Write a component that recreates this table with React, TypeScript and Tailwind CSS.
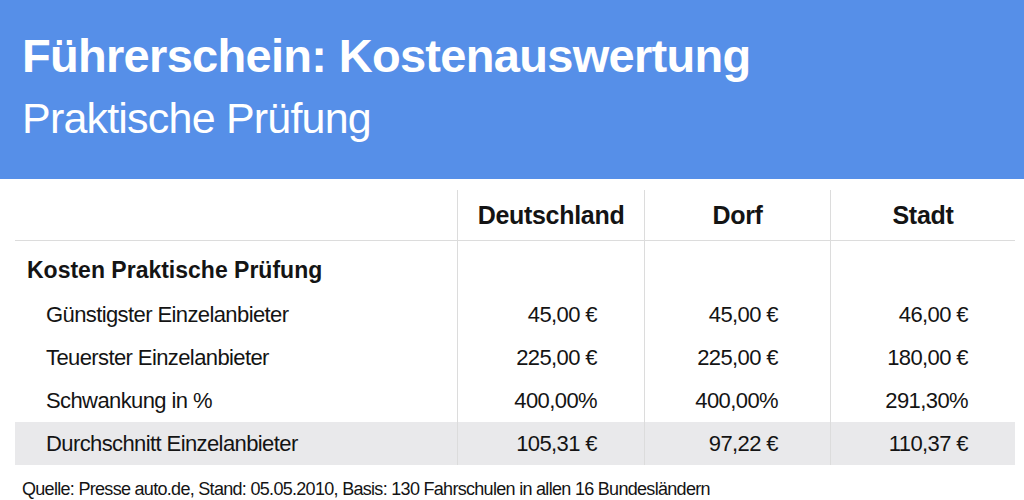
import React from 'react';

const rows = [
  { label: 'Günstigster Einzelanbieter', values: ['45,00 €', '45,00 €', '46,00 €'] },
  { label: 'Teuerster Einzelanbieter', values: ['225,00 €', '225,00 €', '180,00 €'] },
  { label: 'Schwankung in %', values: ['400,00%', '400,00%', '291,30%'] },
  { label: 'Durchschnitt Einzelanbieter', values: ['105,31 €', '97,22 €', '110,37 €'], shaded: true },
];

const cols = ['Deutschland', 'Dorf', 'Stadt'];
const padRight = ['pr-[47px]', 'pr-[52px]', 'pr-[47px]'];

const App: React.FC = () => {
  return (
    <div className="w-[1024px] h-[500px] overflow-hidden bg-white text-[#141414] font-['Liberation_Sans',Arial,sans-serif]">
      {/* Header */}
      <div className="h-[179px] bg-[#568fe8] pl-[22px] pt-[32px] text-white">
        <h1 className="text-[47px] leading-[47px] font-bold tracking-[-0.7px]">Führerschein: Kostenauswertung</h1>
        <h2 className="mt-[18px] text-[43px] leading-[43px] tracking-[-0.8px]">Praktische Prüfung</h2>
      </div>

      {/* Table */}
      <div className="mx-[15px] mt-[11px] grid grid-cols-[442px_187px_186px_185px]">
        <div className="h-[51px] border-b border-[#dcdcdc]" />
        {cols.map((c) => (
          <div
            key={c}
            className="h-[51px] border-b border-l border-[#dcdcdc] flex items-center justify-center text-[25px] leading-[25px] font-bold tracking-[-0.3px]"
          >
            {c}
          </div>
        ))}

        <div className="h-[52px] pt-[6px] pl-[12px] flex items-center text-[23px] leading-[23px] font-bold">
          Kosten Praktische Prüfung
        </div>
        {cols.map((c) => (
          <div key={c} className="h-[52px] border-l border-[#dcdcdc]" />
        ))}

        {rows.map((r) => (
          <React.Fragment key={r.label}>
            <div
              className={`h-[43px] pl-[31px] flex items-center text-[22px] leading-[22px] tracking-[-0.6px] ${
                r.shaded ? 'bg-[#e9e9eb]' : ''
              }`}
            >
              {r.label}
            </div>
            {r.values.map((v, i) => (
              <div
                key={i}
                className={`h-[43px] border-l border-[#dcdcdc] flex items-center justify-end text-[22px] leading-[22px] tracking-[-0.6px] ${padRight[i]} ${
                  r.shaded ? 'bg-[#e9e9eb]' : ''
                }`}
              >
                {v}
              </div>
            ))}
          </React.Fragment>
        ))}
      </div>

      {/* Source */}
      <p className="pl-[22px] pt-[14px] text-[18px] leading-[20px] tracking-[-0.7px]">
        Quelle: Presse auto.de, Stand: 05.05.2010, Basis: 130 Fahrschulen in allen 16 Bundesländern
      </p>
    </div>
  );
};

export default App;
